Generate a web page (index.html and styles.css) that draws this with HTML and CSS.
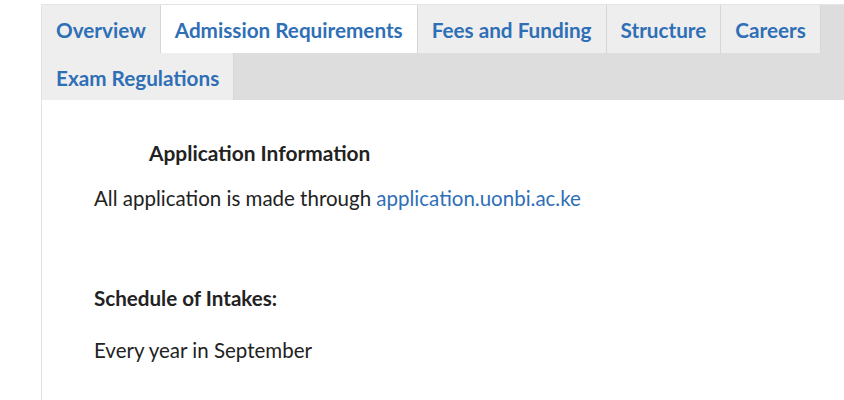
FILE: index.html
```html
<!DOCTYPE html>
<html>
<head>
<meta charset="utf-8">
<link rel="stylesheet" href="styles.css">
</head>
<body>
<div class="tabs-wrap">
  <ul class="tabs">
    <li class="tab"><a href="#">Overview</a></li>
    <li class="tab active"><a href="#">Admission Requirements</a></li>
    <li class="tab"><a href="#">Fees and Funding</a></li>
    <li class="tab"><a href="#">Structure</a></li>
    <li class="tab"><a href="#">Careers</a></li>
    <li class="tab"><a href="#">Exam Regulations</a></li>
  </ul>
  <div class="panel">
    <h4 class="app-title">Application Information</h4>
    <p class="line">All application is made through <a href="#" class="link">application.uonbi.ac.ke</a></p>
    <p class="sched-title">Schedule of Intakes:</p>
    <p class="line last">Every year in September</p>
  </div>
</div>
</body>
</html>
```

FILE: styles.css
```css
html, body {
  margin: 0;
  padding: 0;
  background: #fff;
  font-family: Lato, "Open Sans", sans-serif;
}

.tabs-wrap {
  margin: 4px 0 0 41px;
  border-left: 1px solid #e2e2e2;
  border-top: 1px solid #e4e4e4;
  height: 400px;
}

.tabs {
  list-style: none;
  margin: 0;
  padding: 0;
  display: flex;
  flex-wrap: wrap;
  background: #dddddd;
}

.tab {
  background: #eeeeee;
  border-right: 1px solid #d6d6d6;
}

.tab a {
  display: block;
  padding: 13px 14px 9px 14px;
  font-size: 20.7px;
  line-height: 25.5px;
  font-weight: 700;
  color: #2f6fb6;
  text-decoration: none;
}

.tab.active {
  background: #ffffff;
}

.panel {
  padding: 0 0 0 52px;
  color: #222;
}

.app-title {
  margin: 41px 0 0 55px;
  font-size: 20.9px;
  font-weight: 700;
  line-height: 24px;
}

.line {
  margin: 21px 0 0 0;
  font-size: 20.5px;
  line-height: 24px;
}

.line.last {
  margin-top: 28px;
}

.sched-title {
  margin: 76px 0 0 0;
  font-size: 20.6px;
  font-weight: 700;
  line-height: 24px;
}

.link {
  color: #2f6fb6;
  text-decoration: none;
}
```
